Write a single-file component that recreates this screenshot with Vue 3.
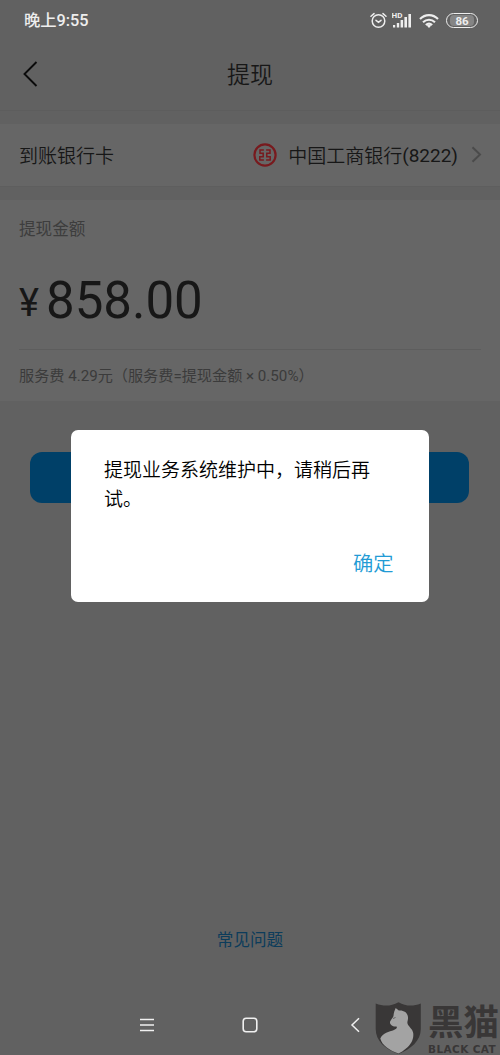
<script setup>
const message = '提现业务系统维护中，请稍后再试。'
</script>

<template>
  <main class="screen">
    <header class="status">
      <span class="time">晚上9:55</span>
      <div class="indicators">
        <svg class="alarm" width="17" height="17" viewBox="0 0 17 17" fill="none" stroke="#eee" stroke-width="1.5" stroke-linecap="round">
          <circle cx="8.5" cy="9" r="6.3" />
          <path d="M1 4.2 4 1.6M16 4.2 13 1.6M6 8.3l2.5 2 2.5-2" />
        </svg>
        <svg class="signal" width="21" height="17" viewBox="0 0 21 17">
          <text x="-.5" y="6.4" class="hd">HD</text>
          <g fill="#eee">
            <rect x="1" y="13" width="2.200" height="2.500" />
            <rect x="4.800" y="11" width="2.400" height="4.500" />
            <rect x="8.600" y="8" width="2.500" height="7.500" />
            <rect x="12.400" y="5" width="2.600" height="10.500" />
            <rect x="16.400" y="2" width="2.600" height="13.500" />
          </g>
        </svg>
        <svg class="wifi" width="20" height="16" viewBox="0 0 20 16" fill="none" stroke="#eee" stroke-width="2.100">
          <path d="M1 6C6 .8 14 .8 19 6M4 9.200c3.500-3.300 8.500-3.300 12 0M6.800 12c2-1.700 4.400-1.700 6.400 0" />
          <path d="M7.700 12.600c1.500-1 3.100-1 4.600 0L10 15z" fill="#eee" stroke="none" />
        </svg>
        <span class="battery"><span>86</span></span>
      </div>
    </header>

    <nav class="titlebar">
      <svg class="back" width="16" height="26" viewBox="0 0 16 26" fill="none" stroke="#0b0b0b" stroke-width="1.9">
        <path d="M13.500 1 1.500 13l12 12" />
      </svg>
      <h1>提现</h1>
    </nav>

    <section class="bank">
      <span>到账银行卡</span>
      <div class="bank-value">
        <svg class="logo" width="24" height="24" viewBox="0 0 24 24" fill="none" stroke="#781a1e">
          <circle cx="12" cy="12" r="10.600" stroke-width="2.200" />
          <path d="M10.900 7H7v3.300h3.200v3.400H6.800V17h4.100M13.100 7H17v3.300h-3.200v3.400h3.400V17h-4.100" stroke-width="1.500" />
        </svg>
        <span>中国工商银行<span class="digits">(8222)</span></span>
        <svg class="arrow" width="11" height="17" viewBox="0 0 11 17" fill="none" stroke="#4b4b4b" stroke-width="2">
          <path d="m1.500 1.200 7.500 7.300-7.500 7.300" />
        </svg>
      </div>
    </section>

    <section class="amount-card">
      <h2>提现金额</h2>
      <div class="amount"><span class="yen">¥</span><span class="number">858.00</span></div>
      <p class="fee">服务费 4.29元（服务费=提现金额 × 0.50%）</p>
    </section>

    <button class="submit" aria-label="提现"></button>
    <a class="faq">常见问题</a>

    <footer class="system-nav">
      <svg width="250" height="20" viewBox="0 0 250 20" fill="none" stroke="#f0f0f0">
        <path d="M15 4.500h14M15 10h14M15 15.500h14" stroke-width="1.500" />
        <rect x="118.200" y="3.200" width="13.600" height="13.600" rx="3" stroke-width="1.600" />
        <path d="m234 3.200-7 6.800 7 6.800" stroke-width="1.500" />
      </svg>
    </footer>

    <aside class="watermark">
      <svg width="47" height="53" viewBox="0 0 47 53">
        <path d="M.7 1.500c8 3 15 3 22.800-1.300C31 4.500 38 4.500 45.800 1.500V27c0 12-10 20-22.300 25C10 47 .7 39 .7 27z" fill="#393737" />
        <path d="M20.700 6 23.800 8.500C28 8 32.500 10 33 15C33.300 18 32 19.500 32.500 21.500C33.500 25 37.500 26.500 38.200 31C39 37 36 42.500 31 46.500C28.500 48.500 26 50.500 23.500 51.500C15 48.500 7 43.500 5.300 36.500C8 30.500 14 30 19 28C21.500 27 22.500 25.500 21.500 24.500C17.500 25 14.500 22.500 15 19.700C16 17.500 18 16 18.500 13.700C18.700 11 19.500 8.500 20.700 6z" fill="#a3a3a3" />
        <path d="m18 16.500 2.500-1" stroke="#535353" stroke-width=".8" />
      </svg>
      <div class="brand"><strong>黑猫</strong><b>BLACK CAT</b></div>
    </aside>

    <div class="dialog" role="dialog">
      <p>{{ message }}</p>
      <button class="confirm">确定</button>
    </div>
  </main>
</template>

<style>
body { margin: 0; }
</style>

<style scoped>
* { box-sizing: border-box; }
.screen {
  position: relative;
  display: flex;
  flex-direction: column;
  width: 500px;
  height: 1055px;
  overflow: hidden;
  background: #616161;
  color: #171717;
  font-family: Roboto, "Noto Sans CJK SC", sans-serif;
}
h1, h2, p { margin: 0; font-weight: 400; }
button { border: 0; padding: 0; font-family: inherit; }
svg { display: block; flex: none; }
.status {
  display: flex;
  justify-content: space-between;
  height: 41px;
  padding: 0 22px 0 24px;
  color: #eee;
}
.time { font-size: 16.300px; line-height: 42px; font-weight: 500; }
.indicators { display: flex; align-items: center; height: 41px; }
.signal { margin-left: 5px; }
.hd { font-size: 8px; font-weight: 700; fill: #eee; }
.wifi { margin-left: 6px; }
.battery {
  display: flex;
  width: 32px;
  height: 15px;
  margin-left: 7px;
  padding: 1px 3px;
  border: 1.500px solid #eee;
  border-radius: 8px;
}
.battery span {
  flex: 1;
  background: #858585;
  border-radius: 4px;
  font-size: 11.500px;
  line-height: 12px;
  font-weight: 700;
  text-align: center;
}
.titlebar {
  display: grid;
  grid-template-columns: 60px 1fr 60px;
  align-items: center;
  height: 70px;
  padding-bottom: 4px;
  border-bottom: 1px solid #5d5d5d;
}
.back { margin-left: 23px; }
h1 { padding-top: 4px; font-size: 23px; line-height: 34px; text-align: center; font-weight: 350; }
.bank {
  display: flex;
  align-items: center;
  justify-content: space-between;
  height: 63px;
  margin-top: 13px;
  padding: 0 18px 1px 19px;
  background: #666;
  border-bottom: 1px solid #5e5e5e;
  font-size: 19px;
  font-weight: 350;
}
.bank-value { display: flex; align-items: center; }
.digits { position: relative; top: -1px; font-weight: 400; }
.logo { margin-right: 11px; }
.arrow { margin-left: 13px; }
.amount-card { height: 201px; margin-top: 13px; padding: 17px 19px 0; background: #666; }
h2 { font-size: 16.600px; line-height: 26px; color: #3d3d3d; }
.amount { display: flex; align-items: baseline; height: 107px; padding-top: 29px; border-bottom: 1px solid #5d5d5d; }
.yen { width: 27px; font-size: 38px; transform: translateY(-2px); }
.number { font-size: 51px; line-height: 58px; }
.fee { color: #3b3b3b; font-size: 15.150px; line-height: 52px; white-space: nowrap; }
.submit { width: 439px; height: 51px; margin: 50.500px 0 0 30.400px; border-radius: 12px; background: #004068; }
.faq { margin: 426.500px auto 0; font-size: 16.600px; line-height: 24px; color: #0c3c5b; }
.system-nav { display: flex; justify-content: center; margin-top: 62px; }
.watermark {
  position: absolute;
  left: 375px;
  top: 1002px;
  display: flex;
  width: 125px;
  color: #393737;
}
.brand { flex: none; margin-left: 6px; padding-top: 4px; }
.brand strong { display: block; font-size: 35.500px; line-height: 35px; font-weight: 700; }
.brand b { display: block; font: 700 10.500px/16px "DejaVu Sans", sans-serif; letter-spacing: .4px; white-space: nowrap; }
.dialog {
  position: absolute;
  left: 71px;
  top: 430px;
  display: flex;
  flex-direction: column;
  width: 358px;
  height: 172px;
  padding: 27px 34px 0 33px;
  border-radius: 7px;
  background: white;
  color: #000;
}
.dialog p { font-size: 19px; line-height: 28.500px; font-weight: 350; }
.confirm { align-self: flex-end; margin: 35px 1.500px 0 0; background: transparent; color: #229bd5; font-size: 20.300px; line-height: 30px; font-weight: 350; }
</style>
